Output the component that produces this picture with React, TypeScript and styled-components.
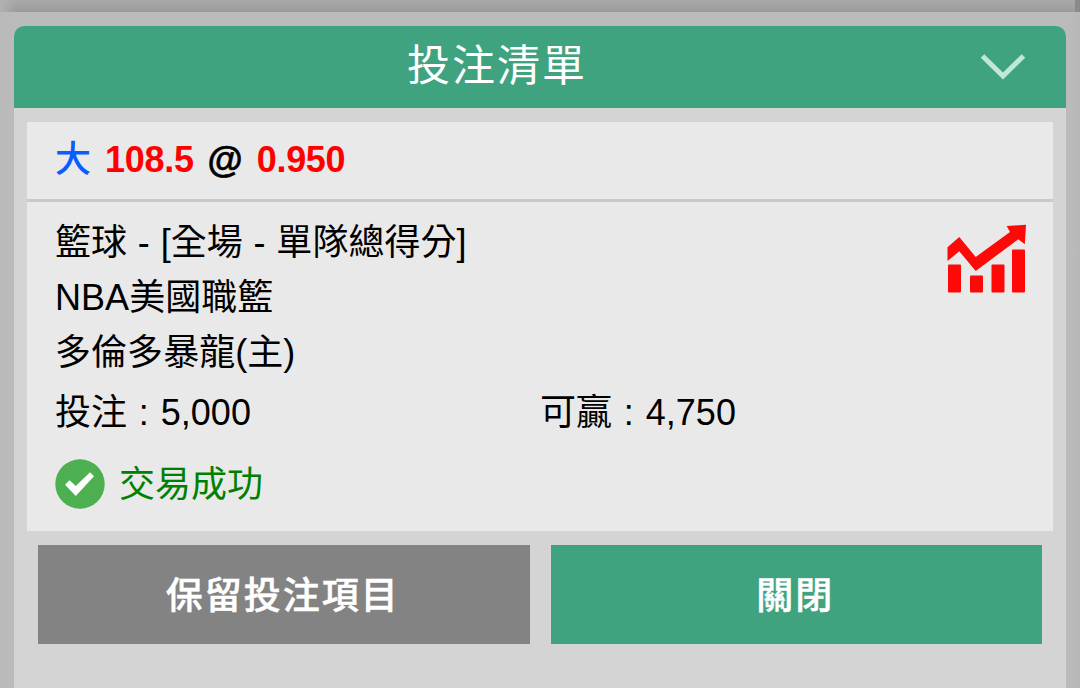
import React from 'react'
import styled, { createGlobalStyle } from 'styled-components'

const GlobalStyle = createGlobalStyle`
	* {
		box-sizing: border-box;
	}

	body {
		margin: 0;
		overflow: hidden;
		background: #bababa;
		font-family: 'Liberation Sans', 'Noto Sans CJK TC', sans-serif;
	}
`

const Page = styled.div`
	display: flex;
	flex-direction: column;
	width: 1080px;
	height: 688px;
	background: linear-gradient(90deg, #b9b9b9 0, #bbbbbb 14px, #bbbbbb 1066px, #b8b8b8 1080px);
`

const PageEdge = styled.div`
	flex: none;
	height: 12px;
	border-right: 5px solid #8a8a8a;
	background:
		linear-gradient(90deg, #b2b2b2 0, #b2b2b200 16px),
		linear-gradient(180deg, #a9a9a9, #9b9b9b);
`

const Panel = styled.section`
	flex: 1;
	display: flex;
	flex-direction: column;
	margin: 14px 14px 0;
	border-radius: 10px 10px 0 0;
	background: #d4d4d4;
`

const Header = styled.header`
	display: grid;
	grid-template-columns: 1fr 86px;
	align-items: center;
	height: 82px;
	border-radius: 10px 10px 0 0;
	background: #40a380;
	color: #fff;
`

const Title = styled.h1`
	margin: 0;
	padding-bottom: 1px;
	font-size: 43px;
	font-weight: 400;
	line-height: 81px;
	letter-spacing: 2px;
	text-align: center;
`

const CollapseButton = styled.button`
	display: flex;
	padding: 0;
	border: 0;
	background: none;
`

const Card = styled.article`
	margin: 14px 13px 0;
	height: 409px;
	background: #e9e9e9;
	font-size: 36px;
	color: #000;
`

const OddsRow = styled.div`
	display: flex;
	align-items: center;
	height: 80px;
	padding: 0 28px 2px;
	border-bottom: 3px solid #c9c9c9;
	font-weight: 700;
`

const Side = styled.span`
	margin-right: 14px;
	padding-bottom: 7px;
	color: #0a5cff;
	font-weight: 500;
`

const Odds = styled.span`
	color: #ff0000;
	letter-spacing: -0.3px;
`

const At = styled.span`
	margin: 0 14px;
	-webkit-text-stroke: 0.6px #000;
`

const Detail = styled.div`
	display: flex;
	justify-content: space-between;
	padding: 13px 26px 0 28px;
	word-spacing: 0.7px;
`

const Line = styled.p`
	margin: 0;
	line-height: 55px;
	letter-spacing: 0.05px;
`

const TrendButton = styled.button`
	display: flex;
	align-self: flex-start;
	margin-top: 9px;
	padding: 0;
	border: 0;
	background: none;
`

const Amounts = styled.div`
	display: grid;
	grid-template-columns: 485px 1fr;
	padding: 5px 28px 0;
	word-spacing: 1.7px;
`

const Status = styled.div`
	display: flex;
	align-items: center;
	gap: 14px;
	height: 50px;
	margin-top: 19px;
	padding-left: 28px;
	color: #008000;
`

const StatusText = styled.span`
	padding-bottom: 6px;
`

const Actions = styled.div`
	display: grid;
	grid-template-columns: 1fr 1fr;
	gap: 21px;
	padding: 14px 24px 0;
`

const ActionButton = styled.button<{ $color: string }>`
	height: 99px;
	padding: 0 2px 4px 0;
	border: 0;
	background: ${({ $color }) => $color};
	color: #fff;
	font-family: inherit;
	font-size: 37px;
	font-weight: 500;
	letter-spacing: 2px;
	-webkit-text-stroke: 0.5px #fff;
`

const ChevronIcon = () => (
	<svg width="46" height="28" viewBox="0 0 46 28" fill="none">
		<path d="M2.5 3 L23 23 L43.5 3" stroke="#c0e8d8" strokeWidth="5" />
	</svg>
)

const TrendIcon = () => (
	<svg width="80" height="70" viewBox="0 0 80 70" fill="#ff0808">
		<path d="M0.5 23.3 L12.3 13 L28.7 33 L63 8 L59.7 2 L79 0.8 L77.8 20.2 L71.3 15.2 L28.7 47 L12.3 27.3 L0.5 37 Z" />
		<rect x="1" y="40.5" width="13" height="28" rx="1" />
		<rect x="23" y="51.5" width="13" height="17" rx="1" />
		<rect x="44.5" y="40.5" width="13" height="28" rx="1" />
		<rect x="65" y="25.5" width="13" height="43" rx="1" />
	</svg>
)

const SuccessIcon = () => (
	<svg width="50" height="50" viewBox="0 0 50 50">
		<circle cx="25" cy="25" r="24.7" fill="#4caf50" />
		<path d="M10 25.7 L14.5 21.2 L20.8 27 L35 13.3 L39 17.3 L20.8 37 Z" fill="#fff" />
	</svg>
)

interface Bet {
	side: string
	line: string
	odds: string
	lines: string[]
	stake: string
	win: string
}

const bet: Bet = {
	side: '大',
	line: '108.5',
	odds: '0.950',
	lines: ['籃球 - [全場 - 單隊總得分]', 'NBA美國職籃', '多倫多暴龍(主)'],
	stake: '5,000',
	win: '4,750',
}

const BetCard: React.FC<{ bet: Bet }> = ({ bet }) => {
	return (
		<Card>
			<OddsRow>
				<Side>{bet.side}</Side>
				<Odds>{bet.line}</Odds>
				<At>@</At>
				<Odds>{bet.odds}</Odds>
			</OddsRow>
			<Detail>
				<div>
					{bet.lines.map((line) => (
						<Line key={line}>{line}</Line>
					))}
				</div>
				<TrendButton aria-label="走勢">
					<TrendIcon />
				</TrendButton>
			</Detail>
			<Amounts>
				<Line>投注 : {bet.stake}</Line>
				<Line>可贏 : {bet.win}</Line>
			</Amounts>
			<Status>
				<SuccessIcon />
				<StatusText>交易成功</StatusText>
			</Status>
		</Card>
	)
}

export default function App() {
	return (
		<>
			<GlobalStyle />
			<Page lang="zh-TW">
				<PageEdge />
				<Panel>
					<Header>
						<Title>投注清單</Title>
						<CollapseButton aria-label="收合">
							<ChevronIcon />
						</CollapseButton>
					</Header>
					<BetCard bet={bet} />
					<Actions>
						<ActionButton $color="#838383">保留投注項目</ActionButton>
						<ActionButton $color="#40a380">關閉</ActionButton>
					</Actions>
				</Panel>
			</Page>
		</>
	)
}
